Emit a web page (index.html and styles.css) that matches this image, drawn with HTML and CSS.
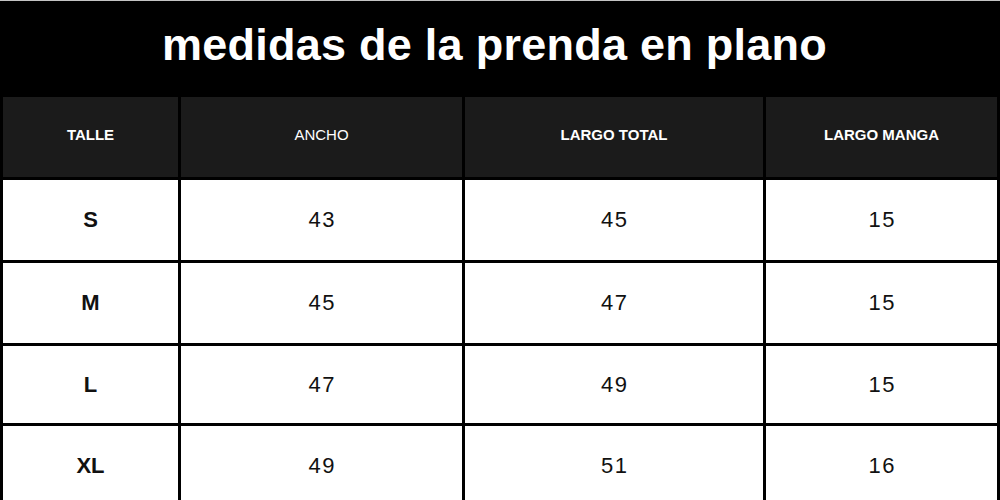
FILE: index.html
```html
<!DOCTYPE html>
<html lang="es">
<head>
<meta charset="utf-8">
<title>medidas de la prenda en plano</title>
<link rel="stylesheet" href="styles.css">
</head>
<body>
<div class="sheet">
  <h1 class="title">medidas de la prenda en plano</h1>
  <div class="grid">
    <div class="cell head bold">TALLE</div>
    <div class="cell head">ANCHO</div>
    <div class="cell head bold">LARGO TOTAL</div>
    <div class="cell head bold">LARGO MANGA</div>

    <div class="cell size">S</div>
    <div class="cell num">43</div>
    <div class="cell num">45</div>
    <div class="cell num">15</div>

    <div class="cell size">M</div>
    <div class="cell num">45</div>
    <div class="cell num">47</div>
    <div class="cell num">15</div>

    <div class="cell size">L</div>
    <div class="cell num">47</div>
    <div class="cell num">49</div>
    <div class="cell num">15</div>

    <div class="cell size">XL</div>
    <div class="cell num">49</div>
    <div class="cell num">51</div>
    <div class="cell num">16</div>
  </div>
</div>
</body>
</html>
```

FILE: styles.css
```css
html, body {
  margin: 0;
  padding: 0;
  background: #ffffff;
}

body {
  width: 1000px;
  height: 500px;
  overflow: hidden;
  font-family: "Liberation Sans", Arial, sans-serif;
}

.sheet {
  width: 1000px;
}

.title {
  margin: 0;
  height: 96px;
  border-top: 1px solid #c4c4c4;
  box-sizing: border-box;
  height: 97px;
  background: #000000;
  color: #ffffff;
  font-size: 45px;
  font-weight: 700;
  letter-spacing: 0.25px;
  display: flex;
  align-items: center;
  justify-content: center;
  padding: 0 11px 9px 0;
  line-height: 1;
}

.grid {
  display: grid;
  grid-template-columns: 175px 281px 298px 231px;
  grid-template-rows: 80px 80px 80px 77px 80px;
  gap: 3px;
  padding: 0 3px;
  background: #000000;
}

.cell {
  display: flex;
  align-items: center;
  justify-content: center;
  background: #ffffff;
  color: #111111;
}

.head {
  background: #1b1b1b;
  color: #ffffff;
  font-size: 15px;
  font-weight: 400;
  padding-bottom: 5px;
  box-sizing: border-box;
}

.head.bold {
  font-weight: 700;
}

.size {
  font-size: 22px;
  font-weight: 700;
}

.num {
  font-size: 22px;
  font-weight: 400;
  letter-spacing: 1.5px;
  text-indent: 1.5px;
}
```
